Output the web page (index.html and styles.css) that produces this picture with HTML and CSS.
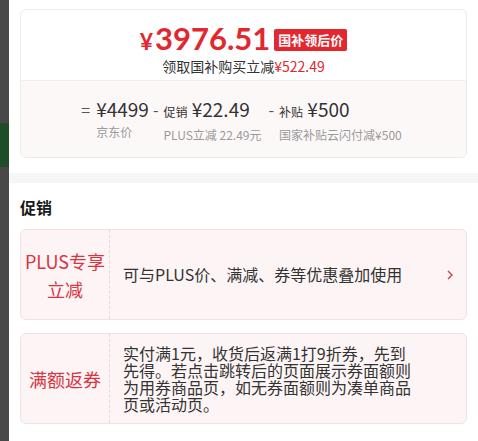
FILE: index.html
```html
<!DOCTYPE html>
<html lang="zh-CN">
<head>
  <meta charset="UTF-8">
  <title>促销</title>
  <meta name="viewport" content="width=device-width, initial-scale=1.0"/>
  <link rel="stylesheet" href="styles.css">
</head>
<body>
  <div class="backdrop">
    <div class="backdrop-green"></div>
  </div>

  <div class="panel">
    <div class="price-wrap">
      <div class="price-card">
        <div class="price-top">
          <div class="price-line">
            <span class="price"><span class="yen">¥</span>3976.51</span>
            <span class="price-tag">国补领后价</span>
          </div>
          <div class="price-sub">领取国补购买立减<span class="red">¥522.49</span></div>
        </div>
        <div class="price-calc">
          <span class="op op-eq">=</span>
          <div class="calc-col">
            <div class="calc-val">¥4499</div>
            <div class="calc-label">京东价</div>
          </div>
          <span class="op">-</span>
          <div class="calc-col">
            <div class="calc-val"><small>促销</small> ¥22.49</div>
            <div class="calc-label">PLUS立减 22.49元</div>
          </div>
          <span class="op op-wide">-</span>
          <div class="calc-col">
            <div class="calc-val"><small>补贴</small> ¥500</div>
            <div class="calc-label">国家补贴云闪付减¥500</div>
          </div>
        </div>
      </div>
    </div>

    <div class="divider"></div>

    <div class="promo">
      <h3>促销</h3>

      <div class="promo-card">
        <div class="promo-name">PLUS专享<br>立减</div>
        <div class="promo-text">可与PLUS价、满减、券等优惠叠加使用</div>
        <svg class="promo-arrow" width="8" height="12" viewBox="0 0 8 12">
          <path d="M2 2l4 4-4 4" fill="none" stroke="#c8414e" stroke-width="1.4"/>
        </svg>
      </div>

      <div class="promo-card">
        <div class="promo-name">满额返券</div>
        <div class="promo-text">实付满1元，收货后返满1打9折券，先到先得。若点击跳转后的页面展示券面额则为用券商品页，如无券面额则为凑单商品页或活动页。</div>
      </div>
    </div>
  </div>
</body>
</html>
```

FILE: styles.css
```css
body {
  margin: 0;
  display: flex;
  height: 441px;
  overflow: hidden;
  background: #fff;
  font-family: "Noto Sans CJK SC", "Noto Sans", sans-serif;
  color: #333;
}
.backdrop {
  width: 9px;
  background: #484848;
  padding-top: 123px;
}
.backdrop-green {
  height: 44px;
  background: #1f4d2a;
}
.panel {
  flex: 1;
}
.price-wrap {
  padding: 9px 11px 0;
}
.price-card {
  border: 1px solid #ecebeb;
  border-radius: 6px;
  overflow: hidden;
}
.price-top {
  height: 71px;
  padding-top: 11px;
  box-sizing: border-box;
  text-align: center;
  border-bottom: 1px solid #f3eeee;
}
.price-line {
  display: flex;
  justify-content: center;
  align-items: center;
  gap: 4px;
  height: 36px;
}
.price {
  color: #e4262f;
  font-family: Lato, "Noto Sans CJK SC", sans-serif;
  font-weight: bold;
  font-size: 31px;
  line-height: 36px;
}
.yen {
  font-size: 23px;
  margin-right: 2px;
}
.price-tag {
  background: #e4262f;
  color: #fff;
  font-size: 13px;
  font-weight: bold;
  line-height: 22px;
  padding: 0 4px;
  border-radius: 2px;
  margin-top: 1px;
}
.price-sub {
  font-size: 14px;
  line-height: 18px;
}
.red {
  color: #e4262f;
}
.price-calc {
  height: 76px;
  background: #fdf8f8;
  display: flex;
  justify-content: center;
  padding-top: 16px;
  box-sizing: border-box;
}
.op {
  font-size: 16px;
  line-height: 24px;
  color: #555;
  padding: 0 5px 0 0;
}
.op-eq {
  padding-right: 6px;
}
.op-wide {
  margin-left: 3px;
}
.calc-col {
  margin-right: 4px;
}
.calc-val {
  font-size: 19px;
  line-height: 24px;
  color: #333;
}
.calc-val small {
  font-size: 12px;
}
.calc-label {
  font-size: 12px;
  line-height: 18px;
  margin-top: 2px;
  color: #9a9a9a;
}
.divider {
  height: 10px;
  background: #f6f6f9;
  margin-top: 15px;
}
.promo {
  padding: 0 11px;
}
.promo h3 {
  margin: 12px 0 10px;
  font-size: 16px;
  line-height: 24px;
  color: #1a1a1a;
}
.promo-card {
  display: flex;
  align-items: center;
  height: 91px;
  box-sizing: border-box;
  background: #fdf5f5;
  border: 1px solid #f1e3e4;
  border-radius: 6px;
  margin-bottom: 13px;
}
.promo-name {
  width: 89px;
  height: 100%;
  flex-shrink: 0;
  display: flex;
  align-items: center;
  justify-content: center;
  text-align: center;
  box-sizing: border-box;
  border-right: 1px dashed #ead5d7;
  color: #dc3340;
  font-size: 18px;
  line-height: 28px;
}
.promo-text {
  flex: 1;
  max-width: 292px;
  padding-left: 13px;
  font-size: 16px;
  line-height: 17px;
}
.promo-arrow {
  margin-left: auto;
  margin-right: 12px;
}
```
